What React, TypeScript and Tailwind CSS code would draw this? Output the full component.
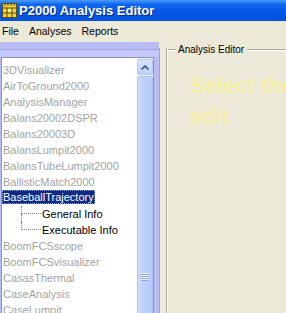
import React from "react";

const items: { t: string; kind: "gray" | "sel" | "child" | "childLast" }[] = [
  { t: "3DVisualizer", kind: "gray" },
  { t: "AirToGround2000", kind: "gray" },
  { t: "AnalysisManager", kind: "gray" },
  { t: "Balans20002DSPR", kind: "gray" },
  { t: "Balans20003D", kind: "gray" },
  { t: "BalansLumpit2000", kind: "gray" },
  { t: "BalansTubeLumpit2000", kind: "gray" },
  { t: "BallisticMatch2000", kind: "gray" },
  { t: "BaseballTrajectory", kind: "sel" },
  { t: "General Info", kind: "child" },
  { t: "Executable Info", kind: "childLast" },
  { t: "BoomFCSscope", kind: "gray" },
  { t: "BoomFCSvisualizer", kind: "gray" },
  { t: "CasasThermal", kind: "gray" },
  { t: "CaseAnalysis", kind: "gray" },
  { t: "CaseLumpit", kind: "gray" },
  { t: "CaseThermal", kind: "gray" },
];

function Row({ t, kind }: { t: string; kind: string }) {
  if (kind === "child" || kind === "childLast") {
    return (
      <div className="h-[16px] flex shrink-0">
        <div className="w-[19px] shrink-0" />
        <div className="w-[20px] shrink-0 flex flex-col">
          <div className="h-[8px] border-l border-b border-dotted border-[#808080]" />
          {kind === "child" ? (
            <div className="h-[8px] border-l border-dotted border-[#808080]" />
          ) : null}
        </div>
        <span className="mt-[1px] h-[14px] leading-[14px] px-[1px] text-black whitespace-nowrap">
          {t}
        </span>
      </div>
    );
  }
  return (
    <div className="h-[16px] flex shrink-0">
      <span
        className={
          kind === "sel"
            ? "mt-[0px] h-[14px] leading-[14px] px-[1px] bg-[#0c2a86] text-white whitespace-nowrap outline-1 outline-dotted outline-[#8aa0e0] -outline-offset-1"
            : "mt-[1px] h-[14px] leading-[14px] px-[1px] text-[#a3a3a3] whitespace-nowrap"
        }
      >
        {t}
      </span>
    </div>
  );
}

export default function App() {
  return (
    <div
      className="w-[286px] h-[313px] overflow-hidden bg-[#ece9d8] flex flex-col"
      style={{ fontFamily: '"Liberation Sans", Arial, sans-serif' }}
    >
      {/* Title bar */}
      <div className="h-[21px] shrink-0 flex items-center bg-[linear-gradient(to_bottom,#4a9bff_0%,#1168f0_20%,#0558e8_50%,#0452e0_100%)]">
        <svg className="ml-[2px] shrink-0" width="15" height="15" viewBox="0 0 15 15">
          <rect x="0.5" y="0.5" width="14" height="14" fill="#f6d43a" stroke="#5a4a10" />
          <line x1="0.5" y1="5" x2="14.5" y2="5" stroke="#5a4a10" />
          <line x1="0.5" y1="10" x2="14.5" y2="10" stroke="#5a4a10" />
          <line x1="5" y1="5" x2="5" y2="14.5" stroke="#5a4a10" />
          <line x1="10" y1="5" x2="10" y2="14.5" stroke="#5a4a10" />
          <line x1="3" y1="0.5" x2="3" y2="3" stroke="#5a4a10" />
          <line x1="6" y1="0.5" x2="6" y2="3" stroke="#5a4a10" />
          <line x1="9" y1="0.5" x2="9" y2="3" stroke="#5a4a10" />
          <line x1="12" y1="0.5" x2="12" y2="3" stroke="#5a4a10" />
          <rect x="6" y="6" width="3" height="3" fill="#fff6a0" />
        </svg>
        <span
          className="ml-[2px] text-white font-bold text-[13px] whitespace-nowrap leading-none"
          style={{ textShadow: "1px 1px 0 #0a2a8a" }}
        >
          P2000 Analysis Editor
        </span>
      </div>

      {/* Menu bar */}
      <div className="h-[21px] shrink-0 flex items-center text-[10.5px] text-black">
        <span className="ml-[2px]">File</span>
        <span className="ml-[10px]">Analyses</span>
        <span className="ml-[10px]">Reports</span>
      </div>

      {/* Body */}
      <div className="flex-1 flex min-h-0">
        {/* Left panel */}
        <div className="w-[159px] shrink-0 bg-[#b9bdf5] flex flex-col pt-[1px]">
          <div className="h-[6px] shrink-0" />
          <div className="h-[1px] shrink-0 bg-[#9fa3d9]" />
          <div className="h-[7px] shrink-0 bg-[#c4c8f8]" />
          <div className="ml-[1px] w-[153px] h-[320px] shrink-0 border border-[#8a93b8] bg-white flex">
            <div className="flex-1 flex flex-col pt-[4px] text-[11px] overflow-hidden">
              {items.map((it) => (
                <Row key={it.t} t={it.t} kind={it.kind} />
              ))}
            </div>
            <div className="w-[16px] shrink-0 flex flex-col bg-[#f4f6fd] pt-[1px]">
              <div className="h-[16px] shrink-0 rounded-[2px] border border-[#b6c8f4] bg-[linear-gradient(to_bottom,#d9e4fe,#bcd0fb)] flex items-center justify-center">
                <svg width="8" height="5" viewBox="0 0 8 5">
                  <path d="M0.5 4.5 L4 1 L7.5 4.5" fill="none" stroke="#4d6185" strokeWidth="1.8" />
                </svg>
              </div>
              <div className="mt-[1px] h-[400px] shrink-0 rounded-[2px] border border-[#aec3f3] bg-[linear-gradient(to_right,#cfdcfd,#bcd0fb_40%,#b6cbf9)] flex flex-col items-center pt-[196px]">
                <div className="w-[8px] h-[1px] bg-[#eef3ff]" />
                <div className="w-[8px] h-[1px] bg-[#8fa9e6]" />
                <div className="w-[8px] h-[1px] bg-[#eef3ff]" />
                <div className="w-[8px] h-[1px] bg-[#8fa9e6]" />
                <div className="w-[8px] h-[1px] bg-[#eef3ff]" />
                <div className="w-[8px] h-[1px] bg-[#8fa9e6]" />
                <div className="w-[8px] h-[1px] bg-[#eef3ff]" />
                <div className="w-[8px] h-[1px] bg-[#8fa9e6]" />
              </div>
            </div>
          </div>
        </div>

        {/* Right panel */}
        <div className="flex-1 flex flex-col pt-[6px] min-w-0">
          <div className="flex-1 flex min-h-0">
            <div className="w-[1px] shrink-0 bg-[#aca899]" />
            <div className="w-[6px] shrink-0" />
            <div className="w-[1px] shrink-0 bg-[#aca899]" />
            <div className="w-[1px] shrink-0 bg-white" />
            <div className="flex-1 flex flex-col min-w-0">
              <div className="h-[4px] shrink-0 flex items-start">
                <div className="w-[8px] mt-[1px] h-[2px] border-t border-[#aca899] border-b border-b-white shrink-0" />
                <span className="ml-[2px] pr-[3px] -mt-[5px] text-[10px] leading-[13px] text-black whitespace-nowrap">
                  Analysis Editor
                </span>
                <div className="flex-1 mt-[1px] h-[2px] border-t border-[#aca899] border-b border-b-white" />
              </div>
              <div
                className="pl-[22px] pt-[18px] text-[22px] leading-[31px] font-bold text-[#f4eea6] whitespace-nowrap"
              >
                Select the analysis to
                <br />
                edit
              </div>
            </div>
          </div>
        </div>
      </div>
    </div>
  );
}
